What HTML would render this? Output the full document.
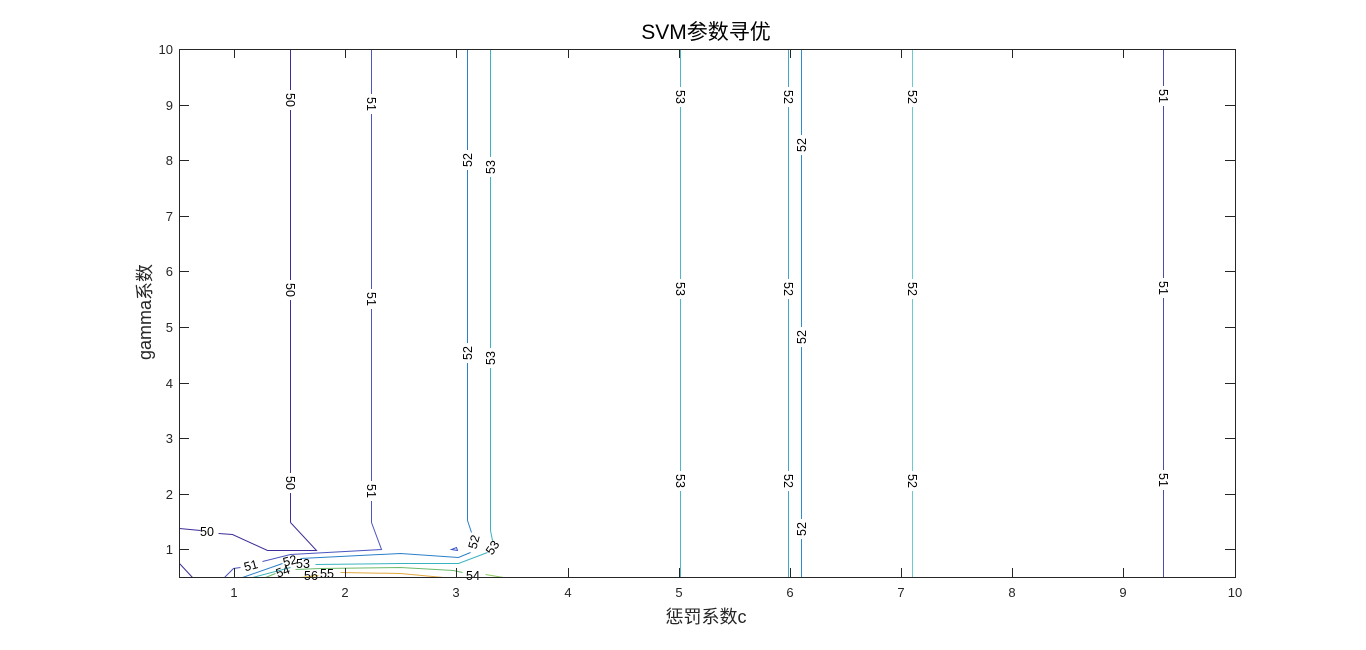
<!DOCTYPE html>
<html><head><meta charset="utf-8"><style>
html,body{margin:0;padding:0;background:#fff;}
svg{display:block;}
text{font-family:"Liberation Sans","Noto Sans CJK SC",sans-serif;}
</style></head><body>
<svg width="1366" height="650" viewBox="0 0 1366 650" xmlns="http://www.w3.org/2000/svg">
<rect width="1366" height="650" fill="#fff"/>
<text x="706" y="39" font-size="21" text-anchor="middle" fill="#000">SVM参数寻优</text>
<g fill="none" stroke-width="1" transform="translate(0.5,0.5)">
<line x1="290" y1="49" x2="290" y2="522" stroke="#3e2f98"/>
<line x1="371" y1="49" x2="371" y2="522" stroke="#4b55c0"/>
<line x1="467" y1="49" x2="467" y2="520" stroke="#2a7fc8"/>
<line x1="490" y1="49" x2="490" y2="530" stroke="#3ab3c0"/>
<line x1="680" y1="49" x2="680" y2="577" stroke="#4fb5c8"/>
<line x1="788" y1="49" x2="788" y2="577" stroke="#45a5c8"/>
<line x1="801" y1="49" x2="801" y2="577" stroke="#2f8ccc"/>
<line x1="912" y1="49" x2="912" y2="577" stroke="#6ccad2"/>
<line x1="1163" y1="49" x2="1163" y2="577" stroke="#4b4ea8"/>
<polyline points="290,522 316,550 267,550 232,534 218,533" stroke="#3e2f98"/>
<polyline points="200,530 179,528" stroke="#3e2f98"/>
<polyline points="179,563 192,577" stroke="#3e2f98"/>
<polyline points="371,522 381,549 290,554 262,561" stroke="#4b55c0"/>
<polyline points="224,577 233,568 240,567" stroke="#4b55c0"/>
<polyline points="467,520 471,532" stroke="#2a7fc8"/>
<polyline points="470,552 458,557 400,553 300,558" stroke="#2a7fc8"/>
<polyline points="282,563 242,577" stroke="#2a7fc8"/>
<polygon points="451,549 456,547 457,550" stroke="#3a55c8"/>
<polyline points="490,530 492,540" stroke="#3ab3c0"/>
<polyline points="487,552 458,563 400,563 315,564" stroke="#3ab3c0"/>
<polyline points="290,567 252,577" stroke="#3ab3c0"/>
<polyline points="503,577 485,574" stroke="#8ccc60"/>
<polyline points="462,572 453,570 400,567 320,568 295,569" stroke="#6cba6a"/>
<polyline points="275,573 265,577" stroke="#6cba6a"/>
<polyline points="443,577 400,573 340,572" stroke="#e0a840"/>
<polyline points="300,577 318,575" stroke="#f0d030"/>
</g>
<g font-size="12.5" fill="#000">
<g text-anchor="middle">
<rect x="283" y="90" width="14" height="20" fill="#fff"/><text transform="translate(286,100) rotate(90)">50</text>
<rect x="283" y="280" width="14" height="20" fill="#fff"/><text transform="translate(286,290) rotate(90)">50</text>
<rect x="283" y="473" width="14" height="20" fill="#fff"/><text transform="translate(286,483) rotate(90)">50</text>
<rect x="364" y="94" width="14" height="20" fill="#fff"/><text transform="translate(367,104) rotate(90)">51</text>
<rect x="364" y="289" width="14" height="20" fill="#fff"/><text transform="translate(367,299) rotate(90)">51</text>
<rect x="364" y="481" width="14" height="20" fill="#fff"/><text transform="translate(367,491) rotate(90)">51</text>
<rect x="673" y="87" width="14" height="20" fill="#fff"/><text transform="translate(676,97) rotate(90)">53</text>
<rect x="673" y="279" width="14" height="20" fill="#fff"/><text transform="translate(676,289) rotate(90)">53</text>
<rect x="673" y="471" width="14" height="20" fill="#fff"/><text transform="translate(676,481) rotate(90)">53</text>
<rect x="781" y="87" width="14" height="20" fill="#fff"/><text transform="translate(784,97) rotate(90)">52</text>
<rect x="781" y="279" width="14" height="20" fill="#fff"/><text transform="translate(784,289) rotate(90)">52</text>
<rect x="781" y="471" width="14" height="20" fill="#fff"/><text transform="translate(784,481) rotate(90)">52</text>
<rect x="905" y="87" width="14" height="20" fill="#fff"/><text transform="translate(908,97) rotate(90)">52</text>
<rect x="905" y="279" width="14" height="20" fill="#fff"/><text transform="translate(908,289) rotate(90)">52</text>
<rect x="905" y="471" width="14" height="20" fill="#fff"/><text transform="translate(908,481) rotate(90)">52</text>
<rect x="1156" y="86" width="14" height="20" fill="#fff"/><text transform="translate(1159,96) rotate(90)">51</text>
<rect x="1156" y="278" width="14" height="20" fill="#fff"/><text transform="translate(1159,288) rotate(90)">51</text>
<rect x="1156" y="470" width="14" height="20" fill="#fff"/><text transform="translate(1159,480) rotate(90)">51</text>
<rect x="460" y="150" width="14" height="20" fill="#fff"/><text transform="translate(472,160) rotate(-90)">52</text>
<rect x="460" y="343" width="14" height="20" fill="#fff"/><text transform="translate(472,353) rotate(-90)">52</text>
<rect x="483" y="157" width="14" height="20" fill="#fff"/><text transform="translate(495,167) rotate(-90)">53</text>
<rect x="483" y="348" width="14" height="20" fill="#fff"/><text transform="translate(495,358) rotate(-90)">53</text>
<rect x="794" y="135" width="14" height="20" fill="#fff"/><text transform="translate(806,145) rotate(-90)">52</text>
<rect x="794" y="327" width="14" height="20" fill="#fff"/><text transform="translate(806,337) rotate(-90)">52</text>
<rect x="794" y="519" width="14" height="20" fill="#fff"/><text transform="translate(806,529) rotate(-90)">52</text>
<text transform="translate(478,543) rotate(-75)">52</text>
<text transform="translate(496,550) rotate(-55)">53</text>
</g>
<text x="200" y="536">50</text>
<text x="244" y="570" transform="rotate(-15 250 566)">51</text>
<text x="283" y="565" transform="rotate(-15 290 561)">52</text>
<text x="296" y="568">53</text>
<text x="276" y="576" transform="rotate(-20 282 572)">54</text>
<text x="304" y="580">56</text>
<text x="320" y="578">55</text>
<text x="466" y="580">54</text>
</g>
<rect x="179.5" y="49.5" width="1056" height="528" fill="none" stroke="#262626" stroke-width="1"/>
<g stroke="#262626" stroke-width="1">
<path d="M234.5,577v-9M345.5,577v-9M456.5,577v-9M568.5,577v-9M679.5,577v-9M790.5,577v-9M901.5,577v-9M1012.5,577v-9M1123.5,577v-9
M234.5,49v9M345.5,49v9M456.5,49v9M568.5,49v9M679.5,49v9M790.5,49v9M901.5,49v9M1012.5,49v9M1123.5,49v9"/>
<path d="M179,549.5h10M179,494.5h10M179,438.5h10M179,383.5h10M179,327.5h10M179,271.5h10M179,216.5h10M179,160.5h10M179,105.5h10
M1235,549.5h-10M1235,494.5h-10M1235,438.5h-10M1235,383.5h-10M1235,327.5h-10M1235,271.5h-10M1235,216.5h-10M1235,160.5h-10M1235,105.5h-10"/>
</g>
<g font-size="13" fill="#262626" text-anchor="middle">
<text x="234" y="597">1</text><text x="345" y="597">2</text><text x="456" y="597">3</text><text x="568" y="597">4</text><text x="679" y="597">5</text><text x="790" y="597">6</text><text x="901" y="597">7</text><text x="1012" y="597">8</text><text x="1123" y="597">9</text><text x="1235" y="597">10</text>
</g>
<g font-size="13" fill="#262626" text-anchor="end">
<text x="173" y="554">1</text><text x="173" y="499">2</text><text x="173" y="443">3</text><text x="173" y="388">4</text><text x="173" y="332">5</text><text x="173" y="276">6</text><text x="173" y="221">7</text><text x="173" y="165">8</text><text x="173" y="110">9</text><text x="173" y="54">10</text>
</g>
<text x="706" y="623" font-size="18" fill="#262626" text-anchor="middle">惩罚系数c</text>
<text transform="translate(151,312) rotate(-90)" font-size="18" fill="#262626" text-anchor="middle">gamma系数</text>
</svg>
</body></html>
